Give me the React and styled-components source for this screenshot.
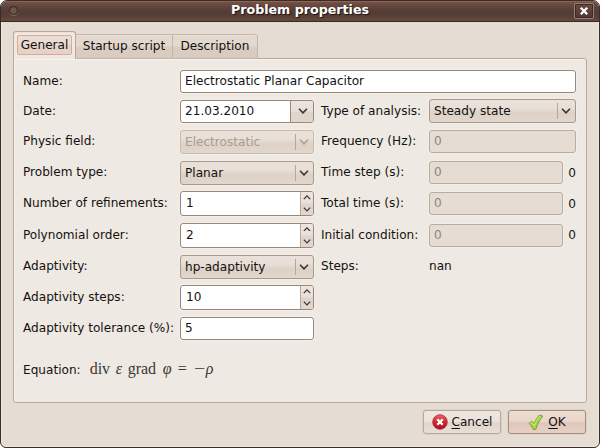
import React from "react";
import styled, { createGlobalStyle, css } from "styled-components";

const Global = createGlobalStyle`
  * { box-sizing: border-box; }
  body { margin: 0; background: #fff; overflow: hidden; }
`;

const Window = styled.div`
  width: 600px;
  height: 448px;
  display: flex;
  flex-direction: column;
  border: 1px solid #3a2d29;
  border-radius: 7px 7px 6px 6px;
  background: #e5dcd3;
  box-shadow: inset 0 0 0 1px #efe8e0;
  overflow: hidden;
  font-family: "DejaVu Sans", sans-serif;
  font-size: 12.1px;
  line-height: 16px;
  color: #141210;
  white-space: nowrap;
`;

const TitleBar = styled.header`
  display: grid;
  grid-template-columns: 26px 1fr 26px;
  align-items: center;
  height: 21px;
  flex: none;
  background: linear-gradient(#7b5548 0, #6d4b40 3px, #563f37 9px, #523c34 13px, #66493f 20px);
  border-bottom: 1px solid #3a2925;
  box-shadow: inset 0 1px #8a6456;
`;

const WindowDot = styled.span`
  width: 9px;
  height: 9px;
  margin: -2px 0 0 8px;
  border-radius: 50%;
  border: 1px solid #2f2320;
  background: #6e564d;
  box-shadow: 0 1px #80665c;
`;

const Title = styled.h1`
  margin: -2px 0 0;
  text-align: center;
  font-size: 12.65px;
  line-height: 18px;
  color: #fff;
  text-shadow: 1px 1px 1px #201512;
`;

const CloseButton = styled.button`
  display: flex;
  align-items: center;
  justify-content: center;
  width: 20px;
  height: 16px;
  margin: 0 0 1px 1px;
  padding: 0;
  border: 1px solid #9a7f74;
  border-radius: 2px;
  background: linear-gradient(#6a4b41, #4e3931);
  box-shadow: inset 0 0 0 1px #3a2925;
`;

const Tabs = styled.nav`
  display: flex;
  align-items: flex-end;
  height: 37px;
  flex: none;
  padding-left: 12px;
  margin-bottom: -1px;
  z-index: 1;
`;

const Tab = styled.div`
  display: flex;
  align-items: center;
  justify-content: center;
  width: ${(p) => p.$width}px;
  height: 25px;
  padding-bottom: 1px;
  border: 1px solid #c5b5a7;
  border-left-width: ${(p) => (p.$first ? 0 : 1)}px;
  border-radius: ${(p) => (p.$last ? "0 3px 0 0" : 0)};
  margin-left: ${(p) => (p.$first ? 0 : -1)}px;
  background: linear-gradient(#e3d9cf 0 45%, #d9cdc2 55%, #d8cbc0);
  box-shadow: inset 0 1px #eae1d8;

  ${(p) => p.$active && css`
    height: 28px;
    margin-left: 0;
    padding: 3px;
    align-items: stretch;
    border: 1px solid #b9a799;
    border-bottom: 0;
    border-radius: 3px 3px 0 0;
    background: #eee9e2;
  `}
`;

const TabFocus = styled.span`
  flex: 1;
  height: 20px;
  line-height: 18px;
  text-align: center;
  border: 1px solid #dca993;
  border-radius: 2px;
  background: linear-gradient(#eaddd4 50%, #e5d3c8 50%);
`;

const Panel = styled.main`
  display: flex;
  flex-direction: column;
  height: 345px;
  flex: none;
  width: 574px;
  margin-left: 12px;
  padding: 7px 10px 0 9px;
  border: 1px solid #b9a799;
  border-radius: 0 3px 3px 3px;
  background: #eee9e2;
  box-shadow: inset 1px 1px #f7f4ef;
`;

const Form = styled.div`
  display: grid;
  grid-template-columns: 157px 134px 7px 108px 147px;
  grid-template-rows: 30px 30px 31px 31px 31px 32px 31px 31px 31px;
  align-items: center;
`;

const Label = styled.label`
  grid-column: ${(p) => p.$col};
  grid-row: ${(p) => p.$row};
  padding-bottom: 1px;
`;

const Cell = styled.div`
  grid-column: ${(p) => p.$col};
  grid-row: ${(p) => p.$row};
  display: flex;
  align-items: center;
  justify-content: space-between;
`;

const buttonFace = "linear-gradient(#ece4dd 0, #e9e1d9 45%, #dfd4ca 55%, #e2d6cd)";

const field = css`
  display: flex;
  align-items: stretch;
  border: 1px solid #9a8779;
  border-radius: 3px;
  box-shadow: 0 0 0 1px #f3eee8;
  overflow: hidden;
`;

const TextField = styled.div`
  ${field}
  width: ${(p) => p.$width}px;
  height: 23px;
  padding-left: 4px;
  line-height: 20px;
  background: ${(p) => (p.$disabled ? "#e5dcd3" : "#fff")};
  border-color: ${(p) => (p.$disabled ? "#bcaa9b" : "#9a8779")};
  color: ${(p) => (p.$disabled ? "#8c857e" : "inherit")};
`;

const Combo = styled.div`
  ${field}
  width: ${(p) => p.$width}px;
  height: 24px;
  align-items: center;
  padding: 0 4px;
  background: linear-gradient(#eae2da 0, #e8dfd7 35%, #ded2c7 60%, #e2d7cd);
  border-color: ${(p) => (p.$disabled ? "#c9baad" : "#a99789")};
  color: ${(p) => (p.$disabled ? "#a99c90" : "inherit")};
`;

const ComboValue = styled.span`
  flex: 1;
  line-height: 22px;
`;

const ComboArrow = styled.span`
  display: flex;
  align-items: center;
  justify-content: flex-end;
  width: 14px;
  height: 16px;
  border-left: 1px solid #b8a799;
`;

const Entry = styled.div`
  ${field}
  width: 134px;
  height: ${(p) => p.$height}px;
  background: #fff;
`;

const EntryValue = styled.span`
  flex: 1;
  padding-left: ${(p) => p.$inset}px;
  line-height: ${(p) => p.$line}px;
`;

const DateArrow = styled.span`
  display: flex;
  align-items: center;
  justify-content: center;
  width: 23px;
  padding-left: 1px;
  border-left: 1px solid #9a8779;
  background: ${buttonFace};
`;

const SpinButtons = styled.span`
  display: flex;
  flex-direction: column;
  align-items: center;
  justify-content: space-between;
  padding: 3px 0;
  width: 13px;
  border-left: 1px solid #b8a799;
  background: ${buttonFace};
`;

const EquationRow = styled.div`
  display: flex;
  align-items: baseline;
  gap: 9px;
  padding-top: 15px;
`;

const Equation = styled.span`
  display: flex;
  align-items: baseline;
  font-family: "Liberation Serif", serif;
  font-size: 16px;
  line-height: 20px;
  color: #3a3836;
`;

const Term = styled.span`
  width: ${(p) => p.$width}px;
  font-style: ${(p) => (p.$symbol ? "italic" : "normal")};
`;

const Minus = styled.span`
  width: 12px;
  transform: scaleX(1.25);
  transform-origin: left;
`;

const Footer = styled.footer`
  display: flex;
  justify-content: flex-end;
  gap: 7px;
  padding: 7px 13px 0 0;
`;

const Button = styled.button`
  display: flex;
  align-items: center;
  justify-content: center;
  gap: 4px;
  width: 78px;
  height: 24px;
  padding: 0;
  font: inherit;
  color: inherit;
  border: 1px solid ${(p) => (p.$primary ? "#a88d7d" : "#b9a799")};
  border-radius: 3px;
  box-shadow: 0 0 0 1px #ded2c7;
  background: ${(p) => p.$primary
    ? "linear-gradient(#ecdcd2 0, #e8d6cb 48%, #dfc7ba 52%, #e6d0c3)"
    : "linear-gradient(#eee7e1 0, #ebe3dc 48%, #e0d6cd 52%, #e7ded6)"};
`;

const Mnemonic = styled.span`
  text-decoration: underline;
  text-underline-offset: 2px;
`;

function Chevron({ size = 9, up, color = "#3b3734", weight = 1.6 }) {
  return (
    <svg width={size} height={size * 0.6} viewBox="0 0 10 6" fill="none">
      <path d={up ? "M1 5.2 5 1.1 9 5.2" : "M1 .8 5 4.9 9 .8"} stroke={color} strokeWidth={weight} />
    </svg>
  );
}

function ComboBox({ width = 134, disabled, children }) {
  return (
    <Combo $width={width} $disabled={disabled}>
      <ComboValue>{children}</ComboValue>
      <ComboArrow><Chevron size={10} color={disabled ? "#afa297" : undefined} /></ComboArrow>
    </Combo>
  );
}

function SpinBox({ children }) {
  return (
    <Entry $height={25}>
      <EntryValue $inset={5} $line={23}>{children}</EntryValue>
      <SpinButtons>
        <Chevron size={8} up />
        <Chevron size={8} />
      </SpinButtons>
    </Entry>
  );
}

function CancelIcon() {
  return (
    <svg width="16" height="16" viewBox="0 0 16 16">
      <defs>
        <linearGradient id="red" x2="0" y2="1">
          <stop stopColor="#e5676a" />
          <stop offset=".5" stopColor="#cf2832" />
          <stop offset="1" stopColor="#a80f20" />
        </linearGradient>
      </defs>
      <circle cx="8" cy="8" r="7.3" fill="url(#red)" stroke="#b32a31" strokeWidth=".8" />
      <path d="m5.3 5.3 5.4 5.4m0-5.4-5.4 5.4" stroke="#fff" strokeWidth="2.3" />
    </svg>
  );
}

function OkIcon() {
  return (
    <svg width="16" height="17" viewBox="0 0 16 17">
      <path d="M1 9.4 3.9 7.2 6.2 9.6C7.6 6.2 9.3 3.2 11.6 1L14.8 2.2C11.6 5.7 9.4 10.3 7.9 15.2L5.2 15.5C4.1 12.8 2.8 11 1 9.4Z" fill="#a5d63c" stroke="#719f35" strokeWidth=".9" strokeLinejoin="round" />
      <path d="M2.5 9.4 3.7 8.5 6.3 11.5C7.6 7.8 9.4 4.6 11.9 2.2" fill="none" stroke="#d3ef83" strokeWidth=".9" />
    </svg>
  );
}

const leftLabels = [
  "Name:", "Date:", "Physic field:", "Problem type:", "Number of refinements:",
  "Polynomial order:", "Adaptivity:", "Adaptivity steps:", "Adaptivity tolerance (%):",
];
const rightLabels = [
  "Type of analysis:", "Frequency (Hz):", "Time step (s):", "Total time (s):",
  "Initial condition:", "Steps:",
];

export default function App() {
  return (
    <>
      <Global />
      <Window>
        <TitleBar>
          <WindowDot />
          <Title>Problem properties</Title>
          <CloseButton aria-label="Close">
            <svg width="10" height="10" viewBox="0 0 10 10">
              <path d="m1.8 1.8 6.4 6.4m0-6.4-6.4 6.4" stroke="#fff" strokeWidth="2.3" />
            </svg>
          </CloseButton>
        </TitleBar>
        <Tabs>
          <Tab $active $width={63}><TabFocus>General</TabFocus></Tab>
          <Tab $first $width={97}>Startup script</Tab>
          <Tab $last $width={86}>Description</Tab>
        </Tabs>
        <Panel>
          <Form>
            {leftLabels.map((text, i) => <Label key={text} $col={1} $row={i + 1}>{text}</Label>)}
            {rightLabels.map((text, i) => <Label key={text} $col={4} $row={i + 2}>{text}</Label>)}

            <Cell $col="2 / 6" $row={1}><TextField $width={396}>Electrostatic Planar Capacitor</TextField></Cell>
            <Cell $col={2} $row={2}>
              <Entry $height={23}>
                <EntryValue $inset={4} $line={20}>21.03.2010</EntryValue>
                <DateArrow><Chevron size={10} /></DateArrow>
              </Entry>
            </Cell>
            <Cell $col={2} $row={3}><ComboBox disabled>Electrostatic</ComboBox></Cell>
            <Cell $col={2} $row={4}><ComboBox>Planar</ComboBox></Cell>
            <Cell $col={2} $row={5}><SpinBox>1</SpinBox></Cell>
            <Cell $col={2} $row={6}><SpinBox>2</SpinBox></Cell>
            <Cell $col={2} $row={7}><ComboBox>hp-adaptivity</ComboBox></Cell>
            <Cell $col={2} $row={8}><SpinBox>10</SpinBox></Cell>
            <Cell $col={2} $row={9}><TextField $width={134}>5</TextField></Cell>

            <Cell $col={5} $row={2}><ComboBox width={147}>Steady state</ComboBox></Cell>
            <Cell $col={5} $row={3}><TextField $disabled $width={147}>0</TextField></Cell>
            {[4, 5, 6].map((row) => (
              <Cell key={row} $col={5} $row={row}>
                <TextField $disabled $width={134}>0</TextField>
                <span>0</span>
              </Cell>
            ))}
            <Label $col={5} $row={7}>nan</Label>
          </Form>
          <EquationRow>
            <span>Equation:</span>
            <Equation>
              <Term $width={26}>div</Term>
              <Term $symbol $width={12}>ε</Term>
              <Term $width={35}>grad</Term>
              <Term $symbol $width={15}>φ</Term>
              <Term $width={16}>=</Term>
              <Minus>−</Minus>
              <Term $symbol $width={9}>ρ</Term>
            </Equation>
          </EquationRow>
        </Panel>
        <Footer>
          <Button><CancelIcon /><span><Mnemonic>C</Mnemonic>ancel</span></Button>
          <Button $primary><OkIcon /><span><Mnemonic>O</Mnemonic>K</span></Button>
        </Footer>
      </Window>
    </>
  );
}
